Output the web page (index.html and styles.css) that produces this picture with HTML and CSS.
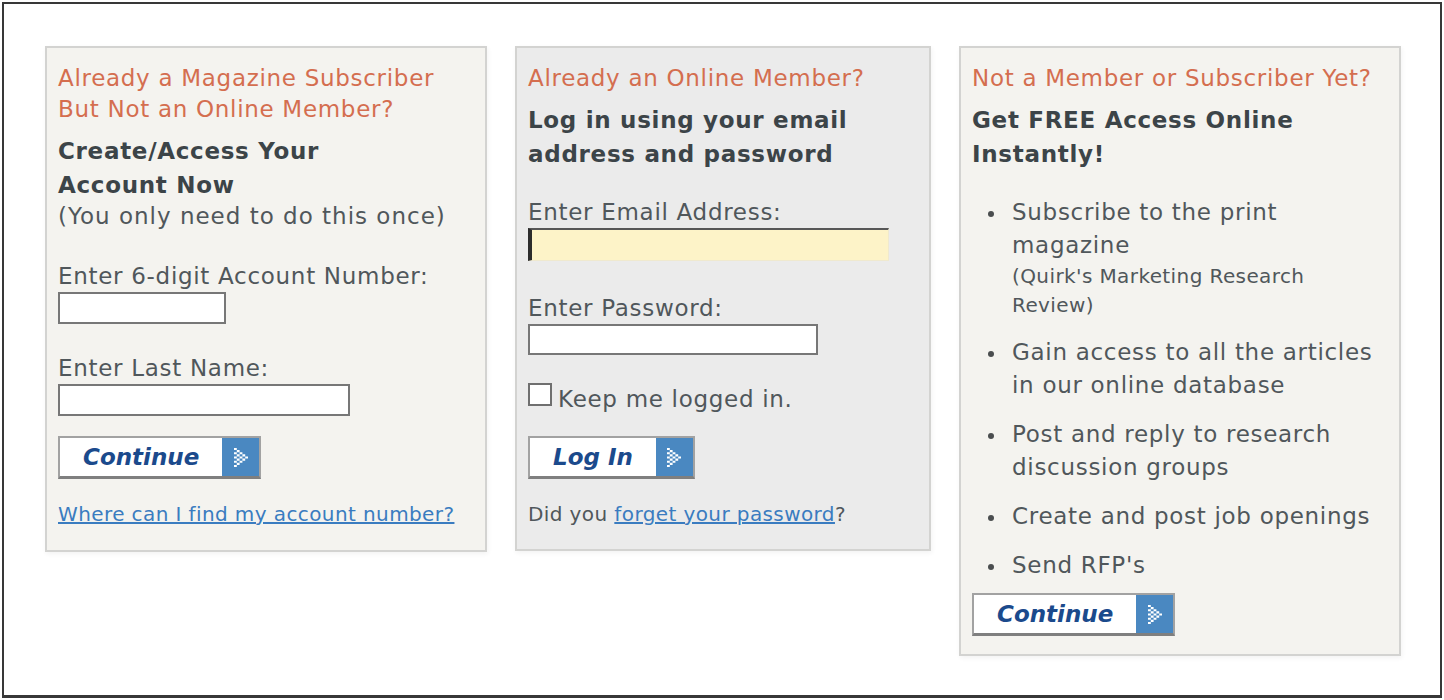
FILE: index.html
```html
<!DOCTYPE html>
<html lang="en">
<head>
<meta charset="utf-8">
<title>Member Login</title>
<link rel="stylesheet" href="styles.css">
</head>
<body>
<div class="frame">
  <div class="panels">

    <section class="panel panel-sub">
      <h2 class="kicker">Already a Magazine Subscriber<br>But Not an Online Member?</h2>
      <p class="lead">Create/Access Your<br>Account Now</p>
      <p class="note">(You only need to do this once)</p>
      <label class="field-label label-acct" for="acct">Enter 6-digit Account Number:</label>
      <input class="field field-acct" id="acct" type="text">
      <label class="field-label label-lname" for="lname">Enter Last Name:</label>
      <input class="field field-lname" id="lname" type="text">
      <button class="btn btn-sub" type="button">
        <span class="btn-label">Continue</span>
        <span class="btn-arrow"><svg class="chev" viewBox="0 0 5 9" preserveAspectRatio="none" aria-hidden="true"><path d="M0 0h1v1H0zM1 1h1v1H1zM0 2h1v1H0zM2 2h1v1H2zM1 3h1v1H1zM3 3h1v1H3zM0 4h1v1H0zM2 4h1v1H2zM4 4h1v1H4zM1 5h1v1H1zM3 5h1v1H3zM0 6h1v1H0zM2 6h1v1H2zM1 7h1v1H1zM0 8h1v1H0z" fill="#fff"/></svg></span>
      </button>
      <p class="foot"><a href="#">Where can I find my account number?</a></p>
    </section>

    <section class="panel panel-login">
      <h2 class="kicker">Already an Online Member?</h2>
      <p class="lead">Log in using your email<br>address and password</p>
      <label class="field-label label-email" for="email">Enter Email Address:</label>
      <input class="field field-email" id="email" type="text">
      <label class="field-label label-pwd" for="pwd">Enter Password:</label>
      <input class="field field-pwd" id="pwd" type="password">
      <div class="remember">
        <input class="check" id="keep" type="checkbox">
        <label for="keep">Keep me logged in.</label>
      </div>
      <button class="btn btn-login" type="button">
        <span class="btn-label">Log In</span>
        <span class="btn-arrow"><svg class="chev" viewBox="0 0 5 9" preserveAspectRatio="none" aria-hidden="true"><path d="M0 0h1v1H0zM1 1h1v1H1zM0 2h1v1H0zM2 2h1v1H2zM1 3h1v1H1zM3 3h1v1H3zM0 4h1v1H0zM2 4h1v1H2zM4 4h1v1H4zM1 5h1v1H1zM3 5h1v1H3zM0 6h1v1H0zM2 6h1v1H2zM1 7h1v1H1zM0 8h1v1H0z" fill="#fff"/></svg></span>
      </button>
      <p class="foot">Did you <a href="#">forget your password</a>?</p>
    </section>

    <section class="panel panel-join">
      <h2 class="kicker">Not a Member or Subscriber Yet?</h2>
      <p class="lead">Get FREE Access Online<br>Instantly!</p>
      <ul class="perks">
        <li><div class="perk-text">Subscribe to the print<br>magazine<small class="perk-sub">(Quirk's Marketing Research<br>Review)</small></div></li>
        <li><div class="perk-text">Gain access to all the articles<br>in our online database</div></li>
        <li><div class="perk-text">Post and reply to research<br>discussion groups</div></li>
        <li><div class="perk-text">Create and post job openings</div></li>
        <li><div class="perk-text">Send RFP's</div></li>
      </ul>
      <button class="btn btn-join" type="button">
        <span class="btn-label">Continue</span>
        <span class="btn-arrow"><svg class="chev" viewBox="0 0 5 9" preserveAspectRatio="none" aria-hidden="true"><path d="M0 0h1v1H0zM1 1h1v1H1zM0 2h1v1H0zM2 2h1v1H2zM1 3h1v1H1zM3 3h1v1H3zM0 4h1v1H0zM2 4h1v1H2zM4 4h1v1H4zM1 5h1v1H1zM3 5h1v1H3zM0 6h1v1H0zM2 6h1v1H2zM1 7h1v1H1zM0 8h1v1H0z" fill="#fff"/></svg></span>
      </button>
    </section>

  </div>
</div>
</body>
</html>
```

FILE: styles.css
```css
* {
  box-sizing: border-box;
}

html,
body {
  margin: 0;
  background: #ffffff;
}

body {
  font-family: "DejaVu Sans", Verdana, sans-serif;
  color: #50575b;
}

.frame {
  margin: 2px;
  width: 1440px;
  height: 696px;
  border: 2px solid #383838;
  border-bottom-width: 3px;
  padding: 42px 0 0 41px;
  background: #ffffff;
}

.panels {
  display: flex;
  align-items: flex-start;
  gap: 28px;
}

.panel {
  border: 2px solid #d3d3d1;
  padding: 15px 11px 24px;
  box-shadow: 1px 2px 5px rgba(0, 0, 0, 0.05);
}

.panel-sub {
  width: 442px;
  background: #f4f3ef;
}

.panel-login {
  width: 416px;
  background: #ebebeb;
  padding-bottom: 23px;
}

.panel-join {
  width: 442px;
  background: #f4f3ef;
  padding-bottom: 18px;
}

.kicker {
  margin: 0;
  font-size: 23px;
  font-weight: normal;
  line-height: 31px;
  letter-spacing: 0.7px;
  color: #d46e4f;
}

.lead {
  margin: 9px 0 0;
  font-size: 23px;
  font-weight: bold;
  line-height: 34px;
  letter-spacing: 0.7px;
  color: #3c4448;
}

.note {
  margin: 0;
  font-size: 23px;
  line-height: 28px;
  letter-spacing: 1px;
}

.field-label {
  display: block;
  font-size: 23px;
  line-height: 30px;
  letter-spacing: 0.7px;
  margin-bottom: 1px;
}

.label-acct {
  margin-top: 31px;
}

.label-lname {
  margin-top: 29px;
}

.label-email {
  margin-top: 26px;
}

.label-pwd {
  margin-top: 32px;
}

.field {
  display: block;
  margin: 0;
  padding: 0 4px;
  border: 2px solid #777777;
  background: #ffffff;
  font: inherit;
}

.field-acct {
  width: 168px;
  height: 32px;
}

.field-lname {
  width: 292px;
  height: 32px;
}

.field-email {
  width: 361px;
  height: 33px;
  background: #fdf3c8;
  border-style: solid;
  border-width: 2px 1px 1px 4px;
  border-color: #575757 #efe9cf #efe9cf #2c2c2c;
}

.field-pwd {
  width: 290px;
  height: 31px;
}

.remember {
  display: flex;
  align-items: flex-start;
  margin-top: 29px;
  font-size: 23px;
  line-height: 30px;
  letter-spacing: 0.7px;
}

.check {
  appearance: none;
  -webkit-appearance: none;
  width: 24px;
  height: 23px;
  margin: -1px 6px 0 0;
  border: 2px solid #6f6f6f;
  background: #ffffff;
}

.btn {
  display: flex;
  align-items: stretch;
  height: 43px;
  margin: 20px 0 0;
  padding: 0;
  border: 2px solid #a2a2a2;
  border-bottom: 3px solid #7f7f7f;
  background: #ffffff;
  font: inherit;
  cursor: pointer;
}

.btn-login {
  margin-top: 22px;
}

.btn-join {
  margin-top: 11px;
}

.btn-label {
  display: flex;
  align-items: center;
  padding: 0 23px;
  background: #ffffff;
  font-family: "DejaVu Sans", Verdana, sans-serif;
  font-size: 23px;
  font-weight: bold;
  font-style: italic;
  color: #1b4a8c;
}

.btn-arrow {
  display: flex;
  align-items: center;
  justify-content: center;
  width: 37px;
  background: #4a88c1;
}

.chev {
  display: block;
  width: 14px;
  height: 19px;
}

.foot {
  margin: 23px 0 0;
  font-size: 20px;
  line-height: 24px;
  letter-spacing: 0.4px;
}

.foot a {
  color: #3a7cc0;
  text-decoration: underline;
}

.perks {
  margin: 25px 0 0;
  padding: 0;
  list-style: none;
}

.perks li {
  display: grid;
  grid-template-columns: 40px 1fr;
  font-size: 23px;
  line-height: 33px;
  letter-spacing: 0.7px;
}

.perks li + li {
  margin-top: 16px;
}

.perks li::before {
  content: "";
  width: 6px;
  height: 6px;
  margin: 15px 0 0 16px;
  border-radius: 50%;
  background: #4a4d4f;
}

.perk-sub {
  display: block;
  font-size: 20px;
  line-height: 29px;
  letter-spacing: 0.4px;
}
```
